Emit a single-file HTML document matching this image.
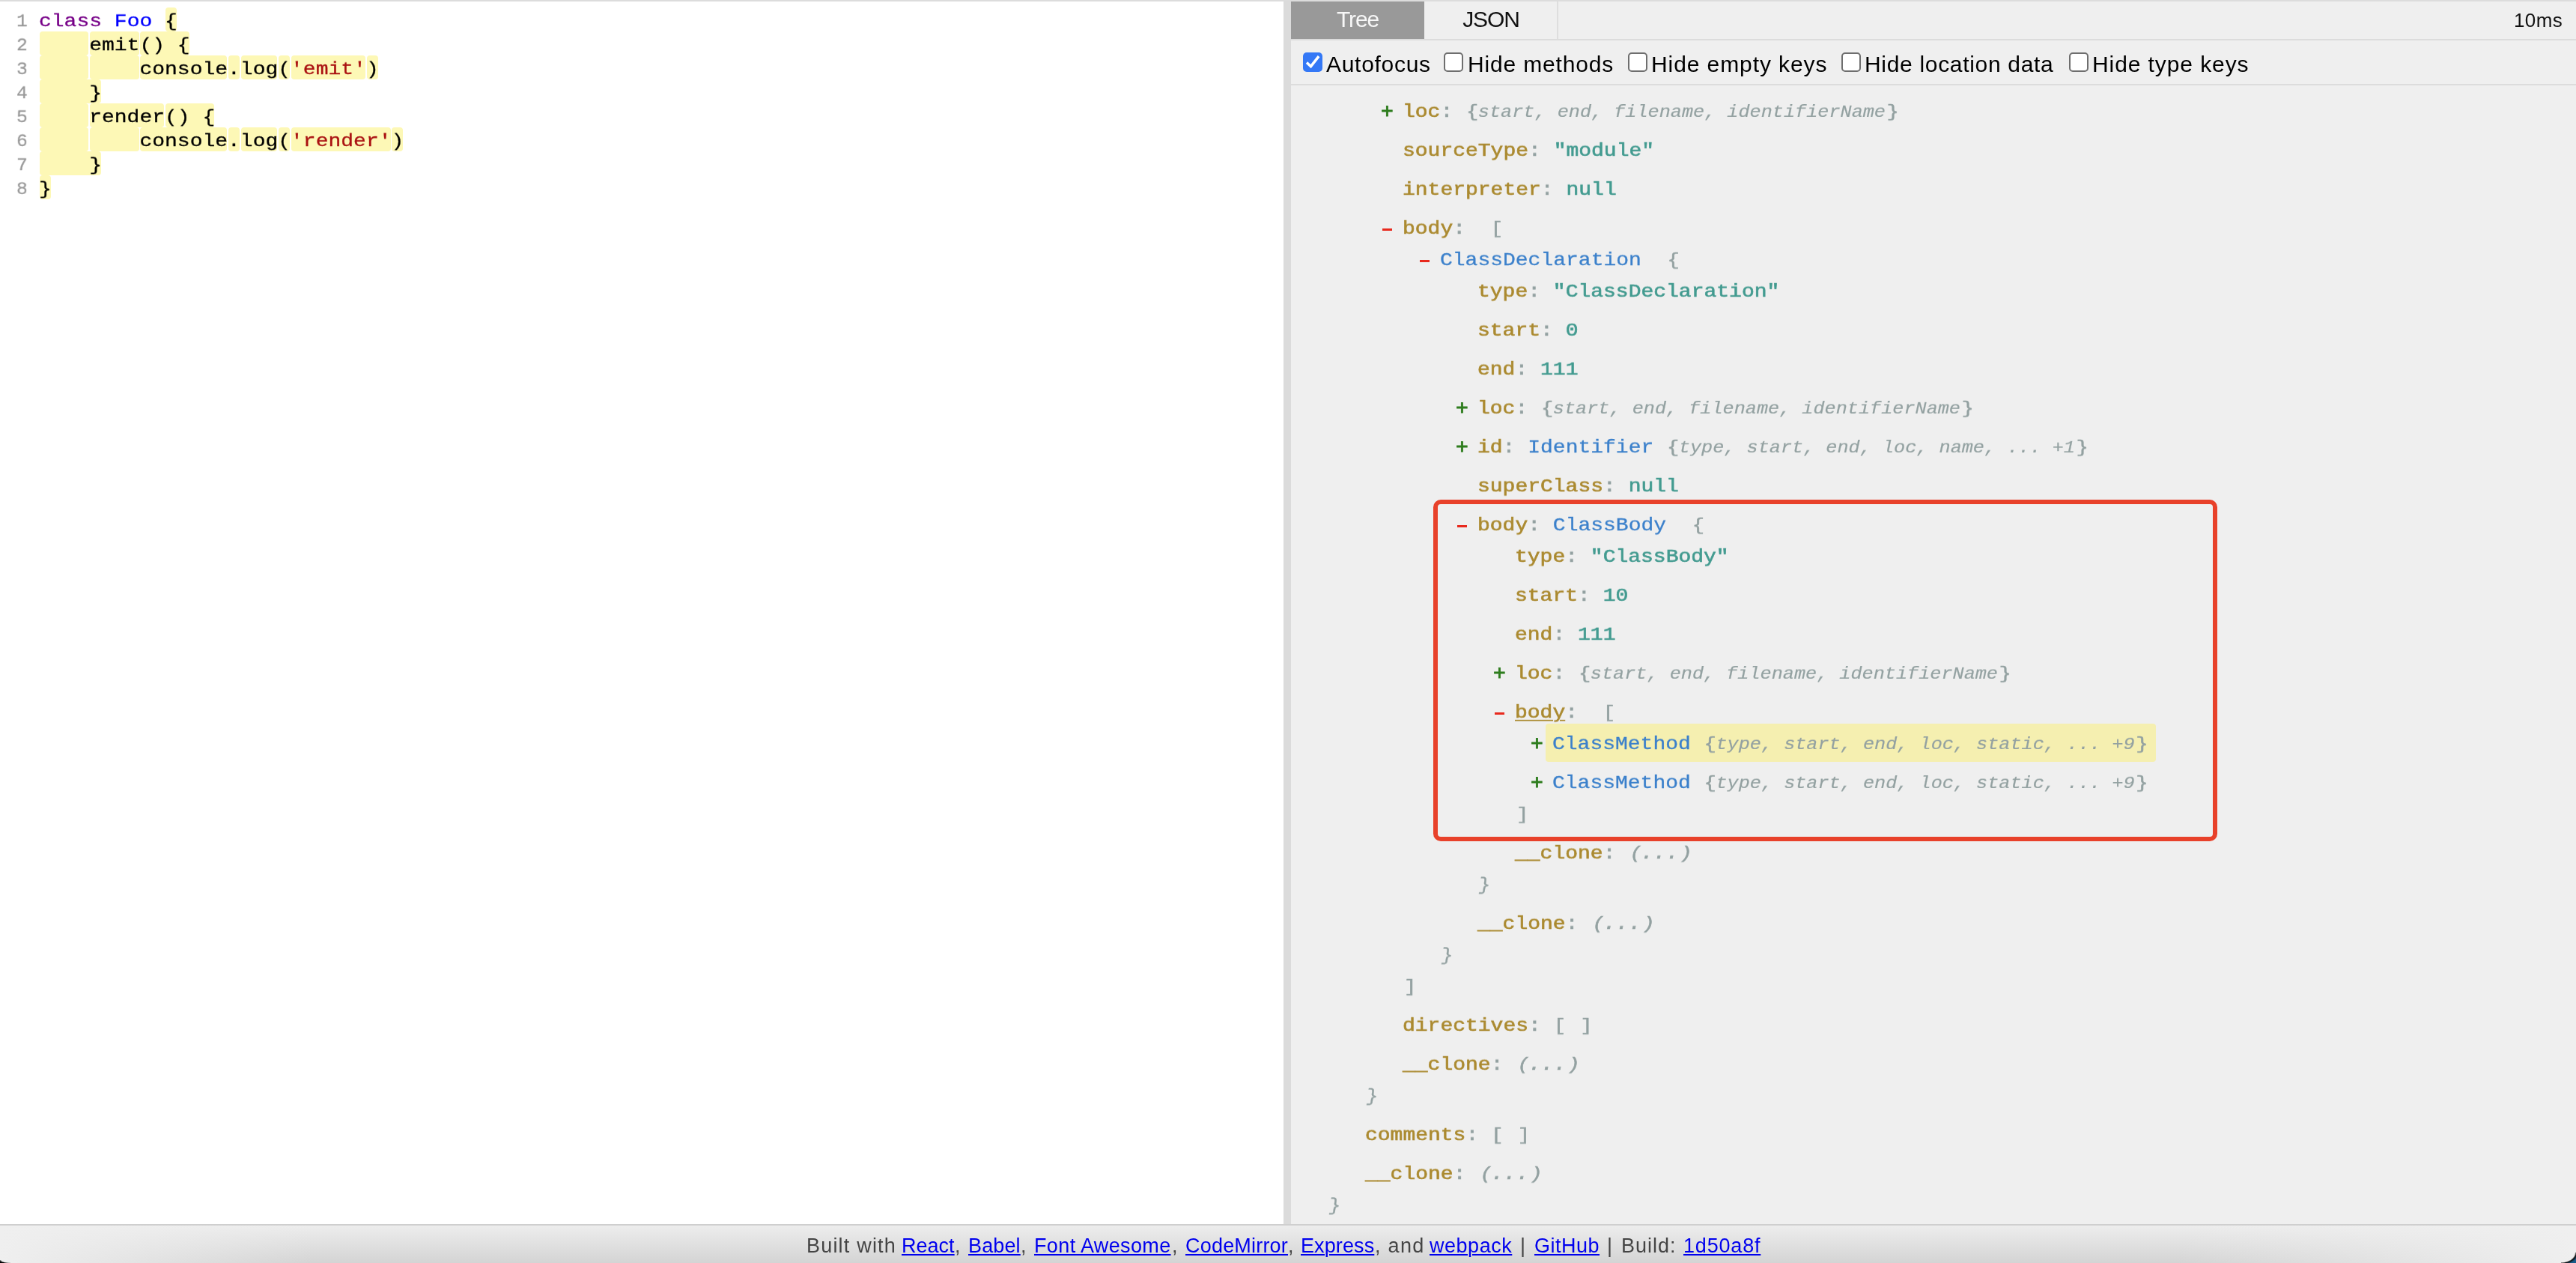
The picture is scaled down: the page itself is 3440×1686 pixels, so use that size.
<!DOCTYPE html><html><head><meta charset="utf-8"><title>AST Explorer</title><style>
*{box-sizing:border-box}
html,body{margin:0;padding:0}
body{width:3440px;height:1686px;position:relative;overflow:hidden;background:#fff;font-family:"Liberation Sans",sans-serif}
.abs{position:absolute;white-space:pre;will-change:transform}
.mono{font-family:"Liberation Mono",monospace}
.code{font-family:"Liberation Mono",monospace;font-size:28px;line-height:32px;height:32px;color:#000;-webkit-text-stroke:0.35px currentColor;transform:scaleY(0.87);transform-origin:0 23.45px}
.ln{color:#999;transform:scale(0.88,0.87) !important;transform-origin:8.4px 23.45px !important}
.kw{color:#770088}
.def{color:#0000ff}
.str{color:#aa1111}
.hl{position:absolute;background:#fdf8b6;border-radius:4px;height:32px}
.tr{font-family:"Liberation Mono",monospace;font-size:28px;line-height:32px;height:32px;font-weight:normal;-webkit-text-stroke:0.7px currentColor;transform:scaleY(0.9);transform-origin:0 23.45px}
.tg{font-family:"Liberation Mono",monospace;font-size:28px;line-height:32px;height:32px;font-weight:normal;-webkit-text-stroke:0.9px currentColor}
.k{color:#ab8a30}
.c{color:#93a1a1}
.t{color:#3b80cb;-webkit-text-stroke:0.35px currentColor}
.s{color:#439b90}
.g{color:#93a1a1;font-weight:normal}
.pi{color:#93a1a1;font-weight:normal;font-style:italic;font-size:25.2px;-webkit-text-stroke:0.2px currentColor}
.pl{color:#2f7d1f}
.mi{position:absolute;height:3px;width:13px;background:#e8291d}
.cb{position:absolute;top:70px;width:26px;height:26px;border-radius:5px;background:#fff;border:2px solid #6e6e6e}
.lab{font-size:30px;line-height:36px;color:#000}
.ft{font-size:27px;line-height:32px;color:#444}
.ft a{color:#0000ee;text-decoration:underline;text-decoration-thickness:2px;text-underline-offset:2px}

.u{text-decoration:underline;text-decoration-thickness:2px;text-underline-offset:3px}
.it{font-style:italic;font-weight:normal}
.br{display:inline-block;position:relative;width:16.8px;text-align:center;font-size:26.5px;line-height:32px;font-weight:normal;font-style:normal;letter-spacing:0}
.bri{font-style:italic}
.sk{transform:skewX(-7deg);-webkit-text-stroke:0.35px #93a1a1}
</style></head><body>
<div class="abs" style="left:0;top:0;width:3440px;height:2px;background:#dcdcdc"></div>
<div class="abs" style="left:0;top:2px;width:1714px;height:1632px;background:#fff"></div>
<div class="abs" style="left:1714px;top:2px;width:10px;height:1632px;background:#dbdbdb"></div>
<div class="abs" style="left:1724px;top:2px;width:1716px;height:1632px;background:#efefef"></div>
<div class="hl" style="left:220.75px;top:10.00px;width:15.30px"></div>
<div class="hl" style="left:52.75px;top:42.00px;width:65.70px"></div>
<div class="hl" style="left:119.95px;top:42.00px;width:65.70px"></div>
<div class="hl" style="left:187.15px;top:42.00px;width:65.70px"></div>
<div class="hl" style="left:52.75px;top:74.00px;width:65.70px"></div>
<div class="hl" style="left:119.95px;top:74.00px;width:65.70px"></div>
<div class="hl" style="left:187.15px;top:74.00px;width:116.10px"></div>
<div class="hl" style="left:304.75px;top:74.00px;width:15.30px"></div>
<div class="hl" style="left:321.55px;top:74.00px;width:48.90px"></div>
<div class="hl" style="left:371.95px;top:74.00px;width:15.30px"></div>
<div class="hl" style="left:388.75px;top:74.00px;width:99.30px"></div>
<div class="hl" style="left:489.55px;top:74.00px;width:15.30px"></div>
<div class="hl" style="left:52.75px;top:106.00px;width:82.50px"></div>
<div class="hl" style="left:52.75px;top:138.00px;width:65.70px"></div>
<div class="hl" style="left:119.95px;top:138.00px;width:99.30px"></div>
<div class="hl" style="left:220.75px;top:138.00px;width:65.70px"></div>
<div class="hl" style="left:52.75px;top:170.00px;width:65.70px"></div>
<div class="hl" style="left:119.95px;top:170.00px;width:65.70px"></div>
<div class="hl" style="left:187.15px;top:170.00px;width:116.10px"></div>
<div class="hl" style="left:304.75px;top:170.00px;width:15.30px"></div>
<div class="hl" style="left:321.55px;top:170.00px;width:48.90px"></div>
<div class="hl" style="left:371.95px;top:170.00px;width:15.30px"></div>
<div class="hl" style="left:388.75px;top:170.00px;width:132.90px"></div>
<div class="hl" style="left:523.15px;top:170.00px;width:15.30px"></div>
<div class="hl" style="left:52.75px;top:202.00px;width:82.50px"></div>
<div class="hl" style="left:52.75px;top:234.00px;width:15.30px"></div>
<div class="abs code ln" style="left:20.8px;top:11.55px">1</div>
<div class="abs code" style="left:52.00px;top:11.55px"><span class="kw">class</span> <span class="def">Foo</span> {</div>
<div class="abs code ln" style="left:20.8px;top:43.55px">2</div>
<div class="abs code" style="left:52.00px;top:43.55px">    emit() {</div>
<div class="abs code ln" style="left:20.8px;top:75.55px">3</div>
<div class="abs code" style="left:52.00px;top:75.55px">        console.log(<span class="str">&#x27;emit&#x27;</span>)</div>
<div class="abs code ln" style="left:20.8px;top:107.55px">4</div>
<div class="abs code" style="left:52.00px;top:107.55px">    }</div>
<div class="abs code ln" style="left:20.8px;top:139.55px">5</div>
<div class="abs code" style="left:52.00px;top:139.55px">    render() {</div>
<div class="abs code ln" style="left:20.8px;top:171.55px">6</div>
<div class="abs code" style="left:52.00px;top:171.55px">        console.log(<span class="str">&#x27;render&#x27;</span>)</div>
<div class="abs code ln" style="left:20.8px;top:203.55px">7</div>
<div class="abs code" style="left:52.00px;top:203.55px">    }</div>
<div class="abs code ln" style="left:20.8px;top:235.55px">8</div>
<div class="abs code" style="left:52.00px;top:235.55px">}</div>
<div class="abs" style="left:1724px;top:2px;width:178px;height:50px;background:#999999"></div>
<div class="abs" style="left:1724px;top:52px;width:1716px;height:2px;background:#dcdcdc"></div>
<div class="abs" style="left:2079px;top:2px;width:2px;height:50px;background:#dedede"></div>
<div class="abs" style="left:1724px;top:2px;width:178px;height:50px;text-align:center;font-size:30px;line-height:47px;letter-spacing:-1.1px;color:#f7f7f7">Tree</div>
<div class="abs" style="left:1902px;top:2px;width:178px;height:50px;text-align:center;font-size:30px;line-height:47px;letter-spacing:-1.1px;color:#111">JSON</div>
<div class="abs" style="left:3357px;top:11px;font-size:26px;line-height:32px;letter-spacing:0.4px;color:#111">10ms</div>
<div class="abs" style="left:1724px;top:112px;width:1716px;height:2px;background:#dcdcdc"></div>
<div class="cb" style="left:1740px;background:#3478f6;border:none"><svg width="26" height="26" viewBox="0 0 26 26" style="position:absolute;left:0;top:0"><path d="M5 13.4 L10.5 18.7 L21.1 5.2" fill="none" stroke="#fff" stroke-width="3.5" stroke-linecap="butt" stroke-linejoin="miter"/></svg></div>
<div class="abs lab" style="left:1771px;top:68px;letter-spacing:0.7px">Autofocus</div>
<div class="cb" style="left:1928.2px"></div>
<div class="abs lab" style="left:1960.4px;top:68px;letter-spacing:0.84px">Hide methods</div>
<div class="cb" style="left:2173.6px"></div>
<div class="abs lab" style="left:2204.8px;top:68px;letter-spacing:0.91px">Hide empty keys</div>
<div class="cb" style="left:2458.5px"></div>
<div class="abs lab" style="left:2490.0px;top:68px;letter-spacing:0.68px">Hide location data</div>
<div class="cb" style="left:2763.3px"></div>
<div class="abs lab" style="left:2793.6px;top:68px;letter-spacing:0.91px">Hide type keys</div>
<div class="abs" style="left:2064px;top:966px;width:815px;height:51px;background:#f5efb0;border-radius:4px"></div>
<div class="abs tg pl" style="left:1844.20px;top:133.55px">+</div>
<div class="abs tr" style="left:1873.00px;top:132.95px"><span class="k">loc</span><span class="c">:</span> <span class="g"><span class="br" style="left:0.75px">{</span></span><span class="pi">start, end, filename, identifierName</span><span class="g"><span class="br" style="left:1.30px">}</span></span></div>
<div class="abs tr" style="left:1873.00px;top:184.95px"><span class="k">sourceType</span><span class="c">:</span> <span class="s">&quot;module&quot;</span></div>
<div class="abs tr" style="left:1873.00px;top:236.95px"><span class="k">interpreter</span><span class="c">:</span> <span class="s">null</span></div>
<div class="mi" style="left:1845.70px;top:305.00px"></div>
<div class="abs tr" style="left:1873.00px;top:288.95px"><span class="k">body</span><span class="c">:</span>  <span class="g"><span class="br" style="left:0.00px">[</span></span></div>
<div class="mi" style="left:1895.70px;top:347.00px"></div>
<div class="abs tr" style="left:1923.00px;top:330.95px"><span class="t">ClassDeclaration</span>  <span class="g"><span class="br" style="left:0.75px">{</span></span></div>
<div class="abs tr" style="left:1973.00px;top:372.95px"><span class="k">type</span><span class="c">:</span> <span class="s">&quot;ClassDeclaration&quot;</span></div>
<div class="abs tr" style="left:1973.00px;top:424.95px"><span class="k">start</span><span class="c">:</span> <span class="s">0</span></div>
<div class="abs tr" style="left:1973.00px;top:476.95px"><span class="k">end</span><span class="c">:</span> <span class="s">111</span></div>
<div class="abs tg pl" style="left:1944.20px;top:529.55px">+</div>
<div class="abs tr" style="left:1973.00px;top:528.95px"><span class="k">loc</span><span class="c">:</span> <span class="g"><span class="br" style="left:0.75px">{</span></span><span class="pi">start, end, filename, identifierName</span><span class="g"><span class="br" style="left:1.30px">}</span></span></div>
<div class="abs tg pl" style="left:1944.20px;top:581.55px">+</div>
<div class="abs tr" style="left:1973.00px;top:580.95px"><span class="k">id</span><span class="c">:</span> <span class="t">Identifier</span> <span class="g"><span class="br" style="left:0.75px">{</span></span><span class="pi">type, start, end, loc, name, ... +1</span><span class="g"><span class="br" style="left:1.30px">}</span></span></div>
<div class="abs tr" style="left:1973.00px;top:632.95px"><span class="k">superClass</span><span class="c">:</span> <span class="s">null</span></div>
<div class="mi" style="left:1945.70px;top:701.00px"></div>
<div class="abs tr" style="left:1973.00px;top:684.95px"><span class="k">body</span><span class="c">:</span> <span class="t">ClassBody</span>  <span class="g"><span class="br" style="left:0.75px">{</span></span></div>
<div class="abs tr" style="left:2023.00px;top:726.95px"><span class="k">type</span><span class="c">:</span> <span class="s">&quot;ClassBody&quot;</span></div>
<div class="abs tr" style="left:2023.00px;top:778.95px"><span class="k">start</span><span class="c">:</span> <span class="s">10</span></div>
<div class="abs tr" style="left:2023.00px;top:830.95px"><span class="k">end</span><span class="c">:</span> <span class="s">111</span></div>
<div class="abs tg pl" style="left:1994.20px;top:883.55px">+</div>
<div class="abs tr" style="left:2023.00px;top:882.95px"><span class="k">loc</span><span class="c">:</span> <span class="g"><span class="br" style="left:0.75px">{</span></span><span class="pi">start, end, filename, identifierName</span><span class="g"><span class="br" style="left:1.30px">}</span></span></div>
<div class="mi" style="left:1995.70px;top:951.00px"></div>
<div class="abs tr" style="left:2023.00px;top:934.95px"><span class="k u">body</span><span class="c">:</span>  <span class="g"><span class="br" style="left:0.00px">[</span></span></div>
<div class="abs tg pl" style="left:2044.20px;top:977.55px">+</div>
<div class="abs tr" style="left:2073.00px;top:976.95px"><span class="t">ClassMethod</span> <span class="g"><span class="br" style="left:0.75px">{</span></span><span class="pi">type, start, end, loc, static, ... +9</span><span class="g"><span class="br" style="left:1.30px">}</span></span></div>
<div class="abs tg pl" style="left:2044.20px;top:1029.55px">+</div>
<div class="abs tr" style="left:2073.00px;top:1028.95px"><span class="t">ClassMethod</span> <span class="g"><span class="br" style="left:0.75px">{</span></span><span class="pi">type, start, end, loc, static, ... +9</span><span class="g"><span class="br" style="left:1.30px">}</span></span></div>
<div class="abs tr" style="left:2023.00px;top:1070.95px"><span class="g"><span class="br" style="left:1.80px">]</span></span></div>
<div class="abs tr" style="left:2023.00px;top:1122.95px"><span class="k">__clone</span><span class="c">:</span> <span class="g it"><span class="br bri" style="left:2.00px">(</span>...<span class="br bri" style="left:1.70px">)</span></span></div>
<div class="abs tr" style="left:1973.00px;top:1164.95px"><span class="g it"><span class="br sk" style="left:1.30px">}</span></span></div>
<div class="abs tr" style="left:1973.00px;top:1216.95px"><span class="k">__clone</span><span class="c">:</span> <span class="g it"><span class="br bri" style="left:2.00px">(</span>...<span class="br bri" style="left:1.70px">)</span></span></div>
<div class="abs tr" style="left:1923.00px;top:1258.95px"><span class="g it"><span class="br sk" style="left:1.30px">}</span></span></div>
<div class="abs tr" style="left:1873.00px;top:1300.95px"><span class="g"><span class="br" style="left:1.80px">]</span></span></div>
<div class="abs tr" style="left:1873.00px;top:1352.95px"><span class="k">directives</span><span class="c">:</span> <span class="g"><span class="br" style="left:0.00px">[</span> <span class="br" style="left:1.80px">]</span></span></div>
<div class="abs tr" style="left:1873.00px;top:1404.95px"><span class="k">__clone</span><span class="c">:</span> <span class="g it"><span class="br bri" style="left:2.00px">(</span>...<span class="br bri" style="left:1.70px">)</span></span></div>
<div class="abs tr" style="left:1823.00px;top:1446.95px"><span class="g it"><span class="br sk" style="left:1.30px">}</span></span></div>
<div class="abs tr" style="left:1823.00px;top:1498.95px"><span class="k">comments</span><span class="c">:</span> <span class="g"><span class="br" style="left:0.00px">[</span> <span class="br" style="left:1.80px">]</span></span></div>
<div class="abs tr" style="left:1823.00px;top:1550.95px"><span class="k">__clone</span><span class="c">:</span> <span class="g it"><span class="br bri" style="left:2.00px">(</span>...<span class="br bri" style="left:1.70px">)</span></span></div>
<div class="abs tr" style="left:1773.00px;top:1592.95px"><span class="g it"><span class="br sk" style="left:1.30px">}</span></span></div>
<div class="abs" style="left:1914px;top:667px;width:1047px;height:456px;border:6px solid #e8412a;border-radius:10px"></div>
<div class="abs" style="left:0;top:1634px;width:3440px;height:2px;background:#cfcfcf"></div>
<div class="abs" style="left:0;top:1636px;width:3440px;height:50px;background:linear-gradient(to right,#efefef 0px,rgba(239,239,239,0) 420px,rgba(239,239,239,0) 2900px,#efefef 3440px),linear-gradient(#ededed,#d4d4d4)"></div>
<div class="abs ft" style="left:1076.6px;top:1647px;letter-spacing:1.20px">Built with</div>
<div class="abs ft" style="left:1204.4px;top:1647px"><a style="letter-spacing:0.02px">React</a></div>
<div class="abs ft" style="left:1275.0px;top:1647px;letter-spacing:0.00px">,</div>
<div class="abs ft" style="left:1293.0px;top:1647px"><a style="letter-spacing:0.14px">Babel</a></div>
<div class="abs ft" style="left:1362.8px;top:1647px;letter-spacing:0.00px">,</div>
<div class="abs ft" style="left:1380.7px;top:1647px"><a style="letter-spacing:0.37px">Font Awesome</a></div>
<div class="abs ft" style="left:1565.0px;top:1647px;letter-spacing:0.00px">,</div>
<div class="abs ft" style="left:1583.0px;top:1647px"><a style="letter-spacing:0.20px">CodeMirror</a></div>
<div class="abs ft" style="left:1720.0px;top:1647px;letter-spacing:0.00px">,</div>
<div class="abs ft" style="left:1737.2px;top:1647px"><a style="letter-spacing:0.11px">Express</a></div>
<div class="abs ft" style="left:1835.5px;top:1647px;letter-spacing:1.30px">, and</div>
<div class="abs ft" style="left:1909.2px;top:1647px"><a style="letter-spacing:0.53px">webpack</a></div>
<div class="abs ft" style="left:2030.3px;top:1647px;letter-spacing:0.00px">|</div>
<div class="abs ft" style="left:2048.5px;top:1647px"><a style="letter-spacing:0.50px">GitHub</a></div>
<div class="abs ft" style="left:2146.3px;top:1647px;letter-spacing:0.00px">|</div>
<div class="abs ft" style="left:2164.5px;top:1647px;letter-spacing:1.00px">Build:</div>
<div class="abs ft" style="left:2248.0px;top:1647px"><a style="letter-spacing:0.81px">1d50a8f</a></div>
<div class="abs" style="left:3420px;top:1672px;width:20px;height:14px;background:radial-gradient(20px 14px at 0 0, rgba(0,0,0,0) 92%, #0a0a0a 102%, #1b5d8a 118%)"></div>
<div class="abs" style="left:0;top:1682px;width:14px;height:4px;background:radial-gradient(14px 4px at 14px 0, rgba(0,0,0,0) 85%, #000 110%)"></div>
</body></html>
